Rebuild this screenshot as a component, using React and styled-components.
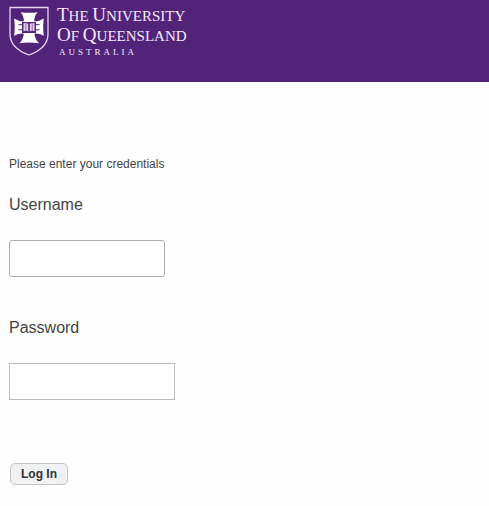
import React from 'react';
import styled, { createGlobalStyle } from 'styled-components'

const GlobalStyle = createGlobalStyle`
    body {
      margin: 0;
      background: #fefefe;
      color: #444;
      font-family: "Liberation Sans", Arial, sans-serif;
    }
`

const StyledHeader = styled.header`
    display: flex;
    align-items: flex-start;
    box-sizing: border-box;
    min-height: 82px;
    padding: 6px 9px;
    background: #51247a;
`

const StyledBrand = styled.a`
    display: flex;
    gap: 8px;
    color: #f8e9fb;
    text-decoration: none;
`

const StyledWordmark = styled.span`
    display: flex;
    flex-direction: column;
    font-family: "Liberation Serif", "Times New Roman", serif;
    white-space: nowrap;
`

const StyledNameLine = styled.span`
    font-size: 15px;
    line-height: 20px;
`

const StyledInitial = styled.span`
    font-size: 19px;
    line-height: 1px;
`

const StyledCountry = styled.span`
    padding-left: 2px;
    font-size: 9px;
    line-height: 12px;
    letter-spacing: 3px;
`

const StyledMain = styled.main`
    padding: 72px 9px 20px;
`

const StyledForm = styled.form`
    display: flex;
    flex-direction: column;
    align-items: flex-start;
`

const StyledIntro = styled.p`
    margin: 0 0 21px;
    font-size: 12px;
    line-height: 20px;
`

const StyledLabel = styled.label`
    margin-bottom: 25px;
    font-size: 16px;
    line-height: 20px;
`

const StyledInput = styled.input`
    box-sizing: border-box;
    width: ${props => props.$wide ? '166px' : '156px'};
    height: 37px;
    margin: 0 0 41px;
    padding: 4px 8px;
    border: 1px solid ${props => props.$wide ? '#bbb' : '#b3abae'};
    border-radius: ${props => props.$wide ? '0' : '3px'};
    background: #fff;
    color: #444;
    font-family: inherit;
    font-size: 14px;
`

const StyledButton = styled.button`
    height: 22px;
    margin: 22px 0 0 1px;
    padding: 0 10px;
    border: 1px solid #c4c4c6;
    border-radius: 5px;
    background: #f0f1f3;
    color: #333;
    font-family: inherit;
    font-size: 12px;
    font-weight: bold;
    line-height: 20px;
`

const Crest = () => (
    <svg width="40" height="50" viewBox="0 0 40 50" fill="none" aria-hidden="true">
        <path d="M1 1.5H39V28C39 38 31 45 20 49C9 45 1 38 1 28Z" stroke="#ecd3f4" strokeWidth="1.3" />
        {/* cross with flared arms */}
        <path
            d="M11.5 6.3Q20 7.4 28.7 6.3Q24.8 10 25.4 15.4Q30.5 15.4 34.7 12.4Q33.6 21 34.7 29.7Q30.5 27.2 25.4 27.6Q25.8 33.2 30 37.3Q20 35.8 10.7 37.3Q14.4 33.2 14.8 27.6Q9.6 27.2 5.2 29.7Q6.4 21 5.2 12.4Q9.6 15.4 14.8 15.4Q15.2 10 11.5 6.3Z"
            fill="#fff"
        />
        {/* open book with clasps */}
        <path d="M13 16H27V27H13Z" fill="#51247a" />
        <path d="M14.5 17.2Q17 16.4 19.2 17.8V25.4Q17 24.4 14.5 25.2ZM20.8 17.8Q23 16.4 25.5 17.2V25.2Q23 24.4 20.8 25.4Z" fill="#e6d2ec" />
        <path d="M16.8 17V25M23.2 17V25" stroke="#7d53a0" strokeWidth=".8" />
        <path d="M9.4 18.7H13.5M9.4 23.8H13.5M26.5 18.7H30.6M26.5 23.8H30.6" stroke="#51247a" strokeWidth="1" />
    </svg>
)

class App extends React.Component {

    state = { username: '', password: '' }

    onChange = (event) => {
        this.setState({ [event.target.name]: event.target.value })
    }

    onSubmit = (event) => {
        event.preventDefault()
    }

    render() {
        return (
            <div>
                <GlobalStyle />
                <StyledHeader>
                    <StyledBrand href="#">
                        <Crest />
                        <StyledWordmark>
                            <StyledNameLine>
                                <StyledInitial>T</StyledInitial>HE <StyledInitial>U</StyledInitial>NIVERSITY
                            </StyledNameLine>
                            <StyledNameLine>
                                <StyledInitial>O</StyledInitial>F <StyledInitial>Q</StyledInitial>UEENSLAND
                            </StyledNameLine>
                            <StyledCountry>AUSTRALIA</StyledCountry>
                        </StyledWordmark>
                    </StyledBrand>
                </StyledHeader>
                <StyledMain>
                    <StyledForm onSubmit={this.onSubmit}>
                        <StyledIntro>Please enter your credentials</StyledIntro>
                        <StyledLabel htmlFor="username">Username</StyledLabel>
                        <StyledInput
                            id="username"
                            name="username"
                            type="text"
                            value={this.state.username}
                            onChange={this.onChange} />
                        <StyledLabel htmlFor="password">Password</StyledLabel>
                        <StyledInput
                            $wide
                            id="password"
                            name="password"
                            type="password"
                            value={this.state.password}
                            onChange={this.onChange} />
                        <StyledButton type="submit">Log In</StyledButton>
                    </StyledForm>
                </StyledMain>
            </div>
        )
    }
}

export default App;
